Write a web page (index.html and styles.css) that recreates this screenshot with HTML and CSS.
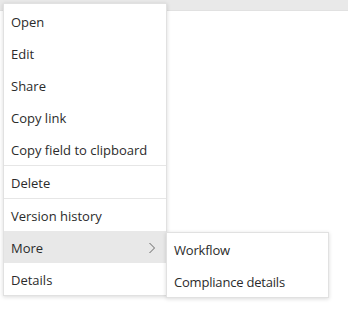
FILE: index.html
```html
<!DOCTYPE html>
<html lang="en">
<head>
    <meta charset="UTF-8">
    <title>Context menu</title>
    <link rel="stylesheet" href="styles.css">
</head>
<body>
    <div class="topbar"></div>

    <ul class="menu">
        <li class="menu-item">Open</li>
        <li class="menu-item">Edit</li>
        <li class="menu-item">Share</li>
        <li class="menu-item">Copy link</li>
        <li class="menu-item">Copy field to clipboard</li>
        <li class="menu-divider"></li>
        <li class="menu-item">Delete</li>
        <li class="menu-divider"></li>
        <li class="menu-item">Version history</li>
        <li class="menu-item has-sub active">
            <span>More</span>
            <svg class="chevron" viewBox="0 0 8 12" fill="none" stroke="currentColor">
                <path d="M1.5 1 L6.5 6 L1.5 11" stroke-width="1"></path>
            </svg>
            <ul class="menu submenu">
                <li class="menu-item">Workflow</li>
                <li class="menu-item">Compliance details</li>
            </ul>
        </li>
        <li class="menu-item">Details</li>
    </ul>
</body>
</html>
```

FILE: styles.css
```css
* {
    margin: 0;
    padding: 0;
    box-sizing: border-box;
}

body {
    font-family: 'Open Sans', 'Noto Sans', sans-serif;
    font-size: 13px;
    color: #2b2b2b;
    background: #fff;
    width: 348px;
    height: 320px;
    position: relative;
    overflow: hidden;
}

.topbar {
    height: 11px;
    background: #e9e9e9;
    border-bottom: 1px solid #e1e1e1;
}

.menu {
    list-style: none;
    position: absolute;
    top: 3px;
    left: 3px;
    width: 164px;
    background: #fff;
    border: 1px solid #e1e1e1;
    padding: 1px 0 0;
    box-shadow: 0 1px 4px rgba(0,0,0,0.15);
}

.menu-item {
    height: 32px;
    padding: 1px 10px 0 7px;
    display: flex;
    align-items: center;
    justify-content: space-between;
    white-space: nowrap;
    position: relative;
}

.menu-item.active {
    background: #e8e8e8;
}

.menu-divider {
    height: 1px;
    background: #e6e6e6;
}

.chevron {
    width: 8px;
    height: 12px;
    color: #666;
}

.submenu {
    top: 1px;
    left: 162px;
    width: 163px;
    padding: 0;
    z-index: 2;
}

.submenu .menu-item {
    letter-spacing: -0.2px;
}
```
